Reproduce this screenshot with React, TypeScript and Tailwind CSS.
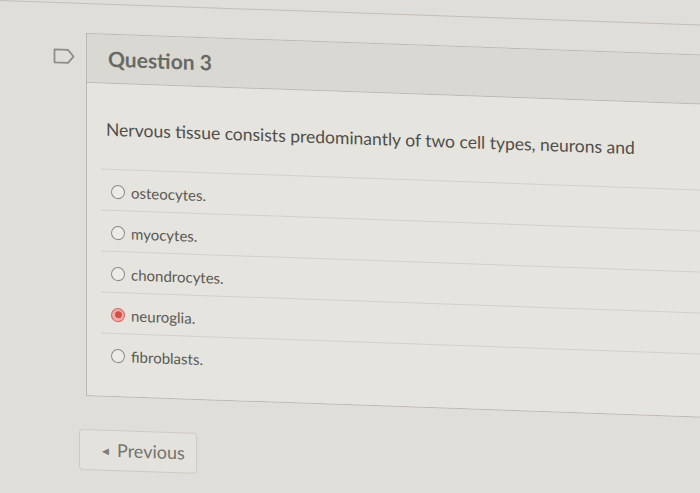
import React from "react"

type OptionProps = {
    label: string
    selected?: boolean
}

const FlagIcon = () => (
    <svg width="24" height="18" viewBox="0 0 24 18" fill="none">
        <path d="M2.5 2.5 H16 L21.5 9 L16 15.5 H2.5 Z" stroke="#8f8d89" strokeWidth="1.8" strokeLinejoin="round" />
    </svg>
)

const Radio = ({ selected }: { selected?: boolean }) => {
    if (selected) {
        return (
            <span className="flex h-[14px] w-[14px] shrink-0 items-center justify-center rounded-full border border-[#d9645f] bg-[#eab1ac]">
                <span className="h-[7px] w-[7px] rounded-full bg-[#d4504c]" />
            </span>
        )
    }
    return <span className="h-[14px] w-[14px] shrink-0 rounded-full border-[1.5px] border-[#8e8c88] bg-[#ecebe6]" />
}

const Option: React.FC<OptionProps> = ({ label, selected }) => (
    <div className="flex h-[41px] items-center gap-[6px] border-t border-[#d3d0ca] pl-[10px] pt-[3px]">
        <Radio selected={selected} />
        <span className="text-[15px] leading-5 text-[#5a5955]">{label}</span>
    </div>
)

export default function App() {
    const options = ["osteocytes.", "myocytes.", "chondrocytes.", "neuroglia.", "fibroblasts."]

    return (
        <div className="h-[493px] w-[700px] overflow-hidden bg-[#e0ded8]" style={{ fontFamily: "Lato, 'Open Sans', sans-serif" }}>
            <div className="origin-top-left skew-y-2 border-t border-[#c2bfb9] bg-[#e0ded8] pb-10">
                <div className="flex pt-[29px]">
                    <div className="w-[86px] shrink-0 pl-[52px] pt-[15px]">
                        <FlagIcon />
                    </div>
                    <div className="w-[640px] shrink-0 border-y border-l border-[#bcb9b3]">
                        <div className="flex h-[49px] items-center border-b border-[#bcb9b3] bg-[#dad8d2] pl-[21px]">
                            <h1 className="text-[21px] font-bold text-[#6a6965]">Question 3</h1>
                        </div>
                        <div className="bg-[#e6e4de] pb-[22px] pl-[14px] pt-[34px]">
                            <p className="pb-[27px] pl-[5px] text-[17.5px] leading-6 text-[#4f4e4a]">
                                Nervous tissue consists predominantly of two cell types, neurons and
                            </p>
                            {options.map((o, i) => (
                                <Option key={o} label={o} selected={i === 3} />
                            ))}
                        </div>
                    </div>
                </div>
                <div className="pl-[79px] pt-[33px]">
                    <button className="flex h-[41px] w-[118px] items-center gap-[8px] rounded-[4px] border border-[#cecbc5] bg-[#e4e2dc] pl-[22px] text-[18px] text-[#74736f]">
                        <span className="text-[9px] text-[#7d7c78]">◀</span>
                        Previous
                    </button>
                </div>
            </div>
        </div>
    )
}
